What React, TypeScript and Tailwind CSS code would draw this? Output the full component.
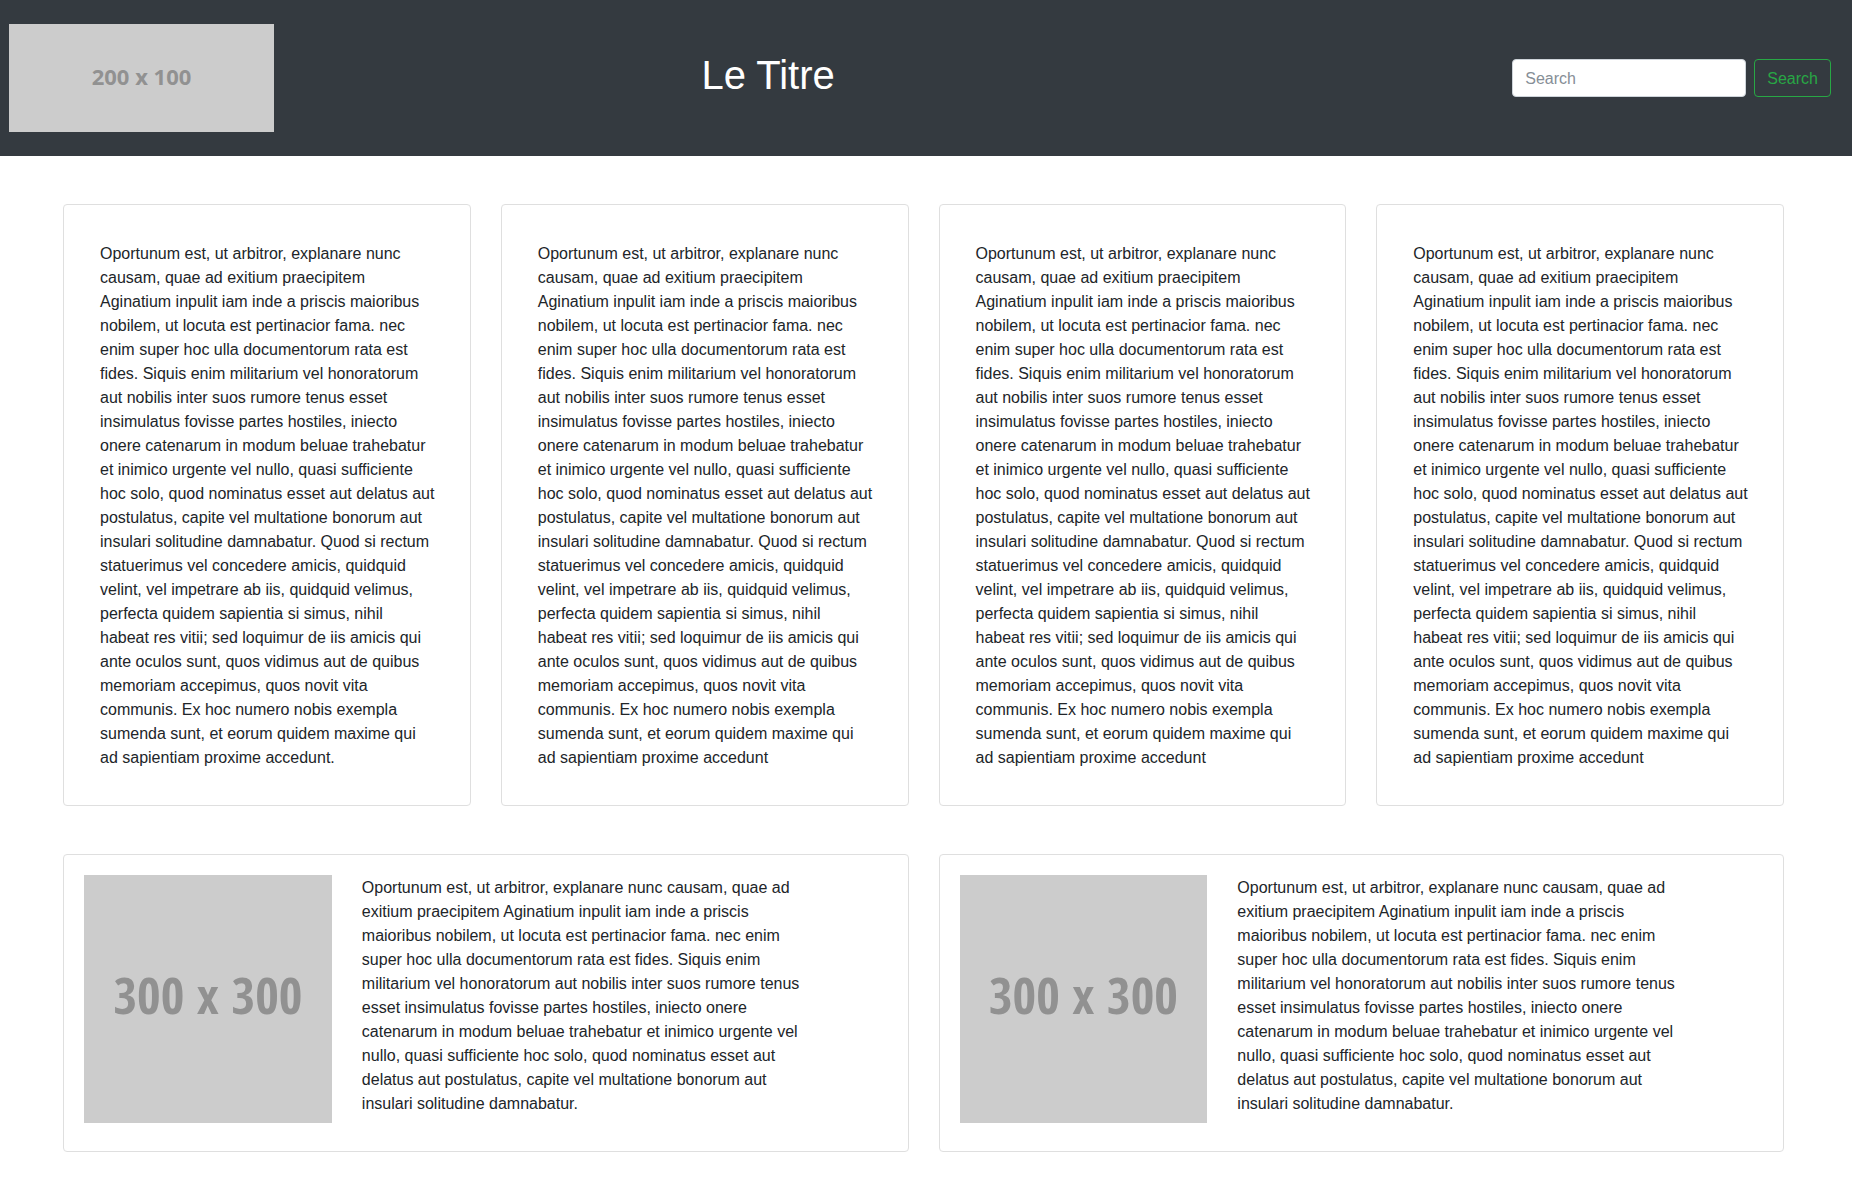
const INTRO =
  'Oportunum est, ut arbitror, explanare nunc causam, quae ad exitium praecipitem Aginatium inpulit iam inde a priscis maioribus nobilem, ut locuta est pertinacior fama. nec enim super hoc ulla documentorum rata est fides. Siquis enim militarium vel honoratorum aut nobilis inter suos rumore tenus esset insimulatus fovisse partes hostiles, iniecto onere catenarum in modum beluae trahebatur et inimico urgente vel nullo, quasi sufficiente hoc solo, quod nominatus esset aut delatus aut postulatus, capite vel multatione bonorum aut insulari solitudine damnabatur.';

const REST =
  'Quod si rectum statuerimus vel concedere amicis, quidquid velint, vel impetrare ab iis, quidquid velimus, perfecta quidem sapientia si simus, nihil habeat res vitii; sed loquimur de iis amicis qui ante oculos sunt, quos vidimus aut de quibus memoriam accepimus, quos novit vita communis. Ex hoc numero nobis exempla sumenda sunt, et eorum quidem maxime qui ad sapientiam proxime accedunt';

const articles = [`${INTRO} ${REST}.`, `${INTRO} ${REST}`, `${INTRO} ${REST}`, `${INTRO} ${REST}`];
const features = [INTRO, INTRO];

function Header() {
  return (
    <header className="flex items-center bg-[#343a40] py-6 pr-[21px] pl-[9px]">
      <div
        role="img"
        aria-label="Logo"
        className="flex h-[108px] w-[265px] shrink-0 items-center justify-center bg-[#cccccc] pb-1 font-['Noto_Sans',sans-serif] text-[22px] font-bold text-[#919191]"
      >
        200 x 100
      </div>
      <h1 className="mb-[6px] flex-1 pr-1 text-center text-[40px] leading-[48px] text-white">Le Titre</h1>
      <form className="flex w-[31%] justify-end gap-2" onSubmit={(e) => e.preventDefault()}>
        <input
          type="search"
          aria-label="Search"
          placeholder="Search"
          className="h-[38px] w-[234px] rounded border border-[#ced4da] bg-white px-3 pt-[2px] text-base text-[#495057] placeholder:text-[#868e96]"
        />
        <button
          type="submit"
          className="h-[38px] rounded border border-[#28a745] px-3 pt-[2px] text-base text-[#28a745]"
        >
          Search
        </button>
      </form>
    </header>
  );
}

function Article({ text }: { text: string }) {
  return (
    <article className="rounded border border-[#dfdfdf] bg-white pt-[37px] pr-[34px] pb-[35px] pl-9">
      <p>{text}</p>
    </article>
  );
}

function Feature({ text }: { text: string }) {
  return (
    <article className="flex rounded border border-[#dfdfdf] bg-white px-[5px] pt-5 pb-7">
      <div className="w-1/3 px-[15px]">
        <div
          role="img"
          aria-label="Illustration"
          className="flex aspect-square items-center justify-center bg-[#cccccc] pb-2 font-['Open_Sans_Condensed','Roboto_Condensed',sans-serif] text-[51px] leading-none font-bold whitespace-nowrap text-[#919191]"
        >
          300 x 300
        </div>
      </div>
      <p className="w-7/12 px-[15px] pt-px">{text}</p>
    </article>
  );
}

export default function App() {
  return (
    <div className="min-h-screen bg-white font-['Liberation_Sans',Arial,sans-serif] text-base leading-6 text-[#212529]">
      <Header />
      <main className="flex flex-col gap-12 py-12 pr-[68px] pl-[63px]">
        <section className="grid grid-cols-4 gap-[30px]">
          {articles.map((text, i) => (
            <Article key={i} text={text} />
          ))}
        </section>
        <section className="grid grid-cols-2 gap-[30px]">
          {features.map((text, i) => (
            <Feature key={i} text={text} />
          ))}
        </section>
      </main>
    </div>
  );
}
